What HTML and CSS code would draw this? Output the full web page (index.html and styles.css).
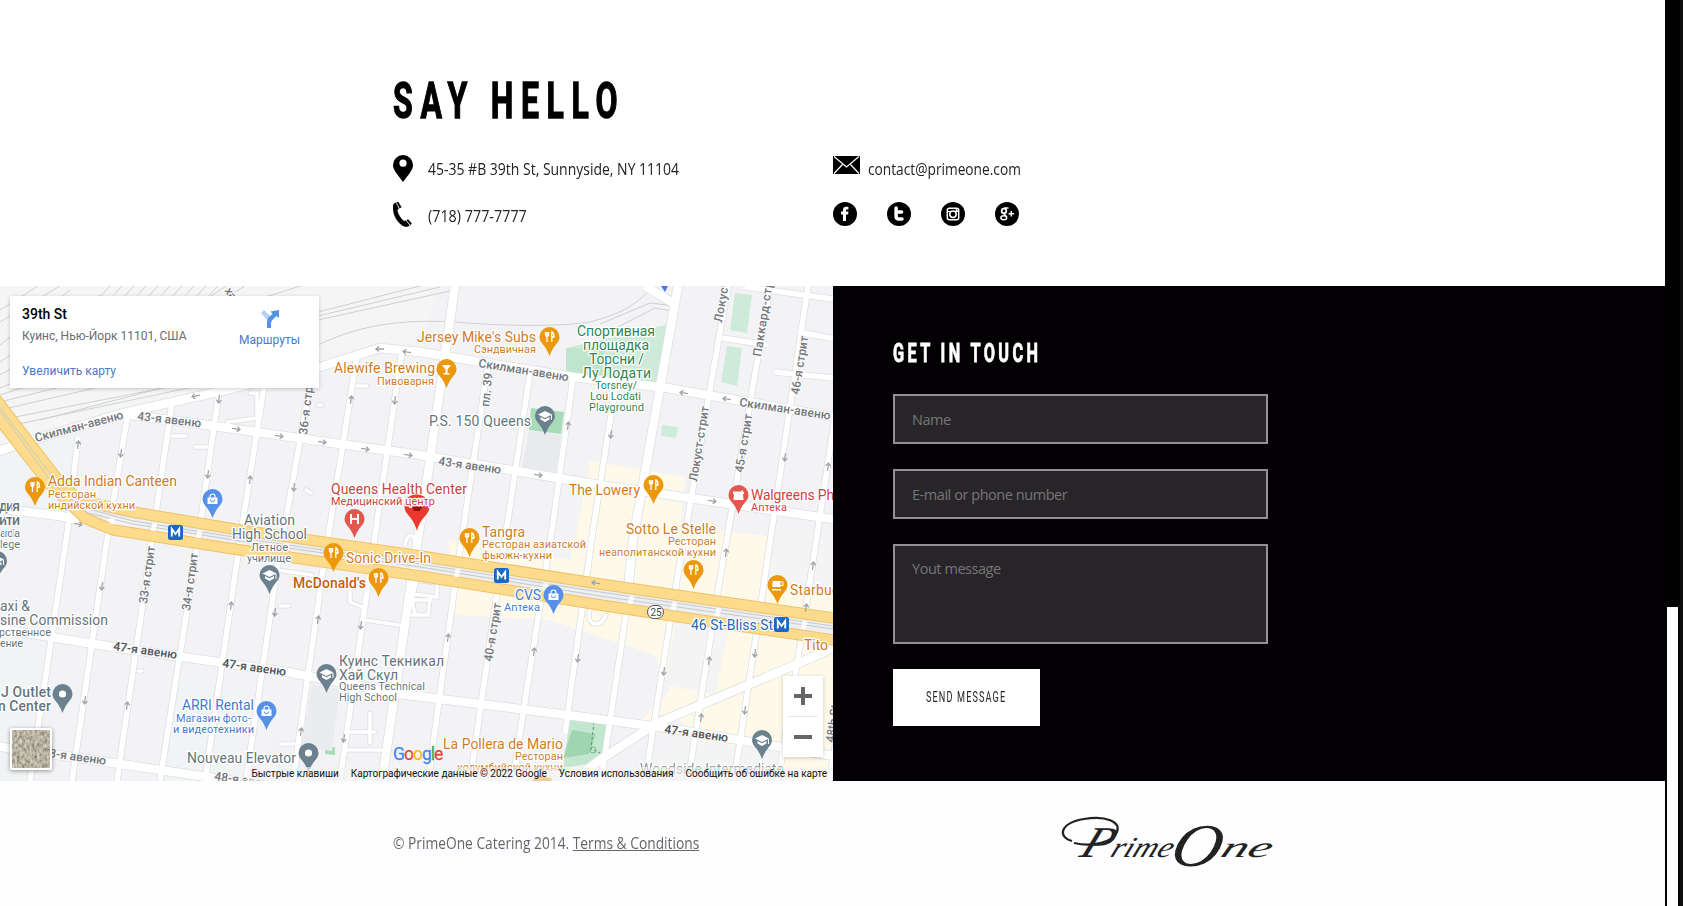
FILE: index.html
```html
<!DOCTYPE html>
<html lang="en">
<head>
<meta charset="utf-8">
<title>PrimeOne Catering – Contact</title>
<link rel="stylesheet" href="styles.css">
</head>
<body>
<div class="shell">
<main class="page">
  <section class="hello">
    <h1 class="hello-title"><span class="cond">SAY HELLO</span></h1>
    <div class="contacts">
      <div class="contact">
        <svg class="ico ico-pin" width="20" height="27" viewBox="0 0 20 27"><path fill-rule="evenodd" d="M10 0a10 10 0 0 1 10 10c0 3-1.600 5.500-3.200 8L10 27 3.200 18C1.600 15.500 0 13 0 10A10 10 0 0 1 10 0zm0 4.600a3.600 3.600 0 1 0 0 7.200 3.600 3.600 0 0 0 0-7.200z"/></svg>
        <span class="line"><span class="sq s-addr">45-35 #B 39th St, Sunnyside, NY 11104</span></span>
      </div>
      <div class="contact mail">
        <svg class="ico ico-mail" width="27" height="20" viewBox="0 0 27 20"><path d="M0 1h27v18H0z"/><path d="M1 1.500l12.500 10.500L26 1.500M1 18.500l8.500-9M26 18.500l-8.500-9" fill="none" stroke="#fff" stroke-width="1.200"/></svg>
        <span class="line"><span class="sq s-mail">contact@primeone.com</span></span>
      </div>
      <div class="contact">
        <svg class="ico ico-tel" width="19" height="26" viewBox="0 0 19 26"><path d="M0 5C0 2.500 1 1.500 2.600.800L5.600 6.600 4.200 8.200C5 12.500 7.500 16.500 11 19.300L12.800 18.800 16.500 23.500C14.500 25 12 25 9.500 23.500 3.500 19.500 0 12 0 5zM3.700.300L5.200 0 8.300 5.300 6.700 6zM13.800 18.300l1.300-.800 3.400 4-1 1.300z" stroke="#000" stroke-width=".5"/></svg>
        <span class="line"><span class="sq s-tel">(718) 777-7777</span></span>
      </div>
      <div class="social">
        <svg width="24" height="24" viewBox="0 0 24 24"><circle cx="12" cy="12" r="12"/><path d="M10 19v-6.500H8V9.600h2V8c0-2.300 1.200-3.300 3.200-3.300h2.200v2.900h-1.500c-.7 0-.9.300-.9.900v1.100h2.400l-.3 2.900H13V19z" fill="#fff"/></svg>
        <svg width="24" height="24" viewBox="0 0 24 24"><circle cx="12" cy="12" r="12"/><path d="M9.100 6v8.300c0 1.600 1 2.700 2.600 2.700h3.300M9.100 10h5.500" fill="none" stroke="#fff" stroke-width="3.500" stroke-linecap="round"/></svg>
        <svg width="24" height="24" viewBox="0 0 24 24"><circle cx="12" cy="12" r="12"/><rect x="6.300" y="6.300" width="11.400" height="11.400" rx="2" fill="none" stroke="#fff" stroke-width="1.500"/><path d="M6 9.500h3.300M14.700 9.500H18" stroke="#fff" stroke-width="1.200"/><circle cx="12" cy="12.300" r="3.200" fill="none" stroke="#fff" stroke-width="1.500"/><path d="M14.600 7.300h2v2h-2z" fill="#fff"/></svg>
        <svg width="24" height="24" viewBox="0 0 24 24"><circle cx="12" cy="12" r="12"/><g fill="none" stroke="#fff"><circle cx="9" cy="8.900" r="2.300" stroke-width="1.800"/><path d="M9 6h4.500M9.500 11.200c-1.500 1 1 1.500 1.600 2.700" stroke-width="1.300"/><ellipse cx="8.800" cy="15.800" rx="2.900" ry="2" stroke-width="1.500"/><path d="M16.300 9v5.600M13.500 11.800h5.600" stroke-width="1.500"/></g></svg>
      </div>
    </div>
  </section>

  <section class="middle">
    <div class="map">
      <svg class="map-canvas" width="833" height="495" viewBox="0 286 833 495">
        <defs>
          <symbol id="pin" viewBox="0 0 20 29" overflow="visible"><path d="M10 0a10 10 0 0 1 10 10c0 3-1.500 5.200-3.500 7.500C13.500 21 12 24 10 29 8 24 6.500 21 3.500 17.500 1.500 15.200 0 13 0 10A10 10 0 0 1 10 0z"/></symbol>
          <g id="food"><use href="#pin" width="20" height="29" fill="#eb980c"/><path d="M6 5v3.500q1.500 1.500 3 0V5M7.500 5v10M12.300 15V5q2.200.5 2.200 5h-2.200" stroke="#fff" stroke-width="1.300" fill="none"/></g>
          <g id="school"><use href="#pin" width="20" height="29" fill="#6b818d"/><path d="M10 5l7 3.500-7 3.500-7-3.500zM5.500 11v2.500L10 16l4.500-2.500V11L10 13.300zM16 9h1v5h-1z" fill="#fff"/></g>
          <g id="spot"><use href="#pin" width="20" height="29" fill="#6b818d"/><circle cx="10" cy="10" r="3.600" fill="#fff"/></g>
          <g id="shop"><use href="#pin" width="20" height="29" fill="#5690e8"/><path d="M5 8.500h10V15H5z" fill="#fff"/><path d="M7.500 9V7.500a2.500 2.500 0 0 1 5 0V9" stroke="#fff" stroke-width="1.200" fill="none"/><path d="M7.800 10.500a2.200 2.200 0 0 0 4.400 0" stroke="#4f8df0" fill="none"/></g>
          <g id="metro"><rect width="15" height="15" rx="2.500" fill="#1a67c5"/><path d="M3.800 11.500V4l3.700 5L11.200 4v7.500" stroke="#fff" stroke-width="1.900" fill="none"/></g>
          <path id="arr" d="M-4 0H4M1-2.500L4 0 1 2.500" fill="none" stroke="#a0a3a7" stroke-width="1.300"/>
          <g id="minor">
            <path d="M78 437L68 527 30 781M128 413L108 533 72 781M172 403L152 540 117 781M219 392L197 547 160 781M265 380L243 520 205 781M310 385L278 563 246 781M357 355L323 570 293 781M402 350L370 570 340 781M488 365L457 570 428 781M530 373L497 593 470 781M573 378L552 530 520 733 513 781M616 383L593 530 565 733M630 587L601 781M728 286L673 603 645 781M770 286L716 603 688 781M808 286L760 610 734 781M836 410L803 627 778 781M845 690L829 781"/>
            <path d="M722 338L768 345M798 332L840 340M775 372L833 378M745 287L833 299"/>
          </g>
          <g id="major">
            <path d="M455 286L427 480 410 590 382 781M678 286L633 540 628 590"/>
            <path d="M-5 452L33 440 123 413 217 392 320 367 380 348 420 352 573 377 667 388 840 418M130 415L200 424 333 443 420 455 600 485 840 520"/>
            <path d="M-5 628L113 647 287 672 400 694 567 715 667 728 840 757M-5 746L107 762 240 782M840 645L767 677 657 723 600 760 565 785M645 286L675 304"/>
            <path d="M-5 508L60 516 100 524"/>
          </g>
          <g id="alleys"><path d="M250 393h7v25l-29 4v5M172 436h14M195 447h12M306 490l5 3M357 386h10M318 405h4M280 606h9M138 671h4M280 744h20M370 713v30M345 732h30M345 750h40M350 590v12l12 5M365 620l40 6M277 570l35 5M405 545c2-15 12-10 10 0s8 12 4 28-10 28-3 42M410 600h20l-2 15h-16M415 580l22 3v14l-25-3M590 610c-5 15 10 20 16 5"/></g>
        </defs>
        <rect y="286" width="833" height="495" fill="#f3f3f5"/>
        <path d="M0 286H440L420 345 380 342 320 362 0 445z" fill="#f5f5f6"/>
        <path d="M0 445L75 435 60 510 0 505zM0 640l40 8-20 133H0zM170 680l80 12-14 89h-80z" fill="#f0f4f4"/>
        <path d="M590 461L686 477 680 525 833 545V781H748L680 720 640 722 670 690 655 655 550 620 455 615 448 540 570 560 575 540z" fill="#fef9e8"/>
        <path d="M680 590l55 10-20 95-50-10zM770 530l63 8v50l-70-5zM680 738l100 14-5 29H640z" fill="#f4f4f4"/>
        <path d="M566 348l100-23-8 66-92-14zM735 293l17 2-5 38-17-3zM727 346l15 2-5 38-16-4zM662 425l16 2-2 11-15-2z" fill="#cdebd8"/>
        <path d="M566 348l38 1-2 28-36-3z" fill="#bfe5cc"/>
        <path d="M531 408l33 4-3 22-32-4z" fill="#a8dbb8"/><path d="M529 431l32 4-5 37-34-4z" fill="#e8eaed"/>
        <path d="M570 718l39 6-9 38-37 6z" fill="#c2e6ce"/><path d="M572 730l24 4-7 20-26 4z" fill="#9fd6b1"/>
        <path d="M594 722l-3 27 9 4" fill="none" stroke="#59976f" stroke-dasharray="3 2"/><circle cx="593" cy="750" r="3" fill="none" stroke="#75b489"/>
        <path d="M325 748l10-1v8l-10-1z" fill="#a8dbb8"/><path d="M312 685l28 4-8 62-30-4z" fill="#ebecef"/>
        <g fill="none" stroke="#cdd1d3" stroke-width="1">
          <path d="M0 310L38 286M0 322L60 286M0 345L70 290M0 362L100 295M0 375L130 300M0 388L160 320M0 395L200 330M0 402L230 345M0 410L260 350M0 420L280 365M0 428L320 360M40 420L230 370"/>
          <path d="M60 340L110 286M72 340L122 286M84 340L134 286M96 340L146 286M108 340L158 286M120 340L170 286M132 340L182 286M144 340L194 286M156 340L206 286M168 340L218 286M190 310L226 286M205 310L245 286"/>
          <path d="M225 310L300 286M318 312L420 286M318 316L440 287M318 320L450 291M318 345C360 325 400 319 455 322 500 326 560 327 590 322 615 315 630 310 650 290M600 324L650 303 675 306M612 330L655 308 672 311"/>
        </g>
        <g fill="none" stroke="#dddfe3" stroke-width="7"><use href="#minor"/></g>
        <g fill="none" stroke="#dddfe3" stroke-width="10"><use href="#major"/></g>
        <g fill="none" stroke="#dadde1" stroke-width="5" stroke-linecap="round"><use href="#alleys"/></g>
        <g fill="none" stroke="#fff" stroke-width="3.500" stroke-linecap="round"><use href="#alleys"/></g>
        <g fill="none" stroke="#fff" stroke-width="5.500"><use href="#minor"/></g>
        <g fill="none" stroke="#fff" stroke-width="8.500"><use href="#major"/></g>

        <path d="M90 508L133 514 240 536 420 562 600 594 833 627" fill="none" stroke="#eceef1" stroke-width="14"/>
        <g fill="none" stroke="#efc268" stroke-width="11.500"><path d="M-5 398L55 476 78 500 133 512 240 530 420 556 600 584 840 619M-8 410L50 485 85 518 113 530 240 550 420 576 600 605 840 641"/></g>
        <g fill="none" stroke="#fcdc8c" stroke-width="9.500"><path d="M-5 398L55 476 78 500 133 512 240 530 420 556 600 584 840 619M-8 410L50 485 85 518 113 530 240 550 420 576 600 605 840 641"/></g>
        <g fill="none" stroke="#c6c9cc" stroke-width="1"><path d="M-5 401L55 480 85 508 133 521 240 538 420 564 600 592 833 626M-5 404L52 483 88 513 133 524 240 541 420 567 600 596 833 629"/></g>
        <path d="M113 518l-1 6M155 523l-2 8M200 530l-2 8M287 543l-1 7M458 569l-2 8M546 583l-2 8M632 596l-2 8M675 602l-2 8M719 608l-2 8M805 621l-2 8" stroke="#fff" stroke-opacity=".8" stroke-width="5"/>

        <use href="#arr" transform="translate(196 396) rotate(168)"/><use href="#arr" transform="translate(219 399) rotate(97)"/><use href="#arr" transform="translate(236 429) rotate(8)"/><use href="#arr" transform="translate(279 436) rotate(8)"/><use href="#arr" transform="translate(322 442) rotate(8)"/><use href="#arr" transform="translate(365 449) rotate(8)"/><use href="#arr" transform="translate(408 455) rotate(8)"/><use href="#arr" transform="translate(380 349) rotate(180)"/><use href="#arr" transform="translate(407 352) rotate(188)"/><use href="#arr" transform="translate(78 445) rotate(-82)"/><use href="#arr" transform="translate(121 453) rotate(98)"/><use href="#arr" transform="translate(208 474) rotate(98)"/><use href="#arr" transform="translate(250 480) rotate(-82)"/><use href="#arr" transform="translate(294 487) rotate(98)"/><use href="#arr" transform="translate(351 400) rotate(-82)"/><use href="#arr" transform="translate(395 400) rotate(98)"/><use href="#arr" transform="translate(78 524) rotate(8)"/>
        <use href="#arr" transform="translate(568 426) rotate(-82)"/><use href="#arr" transform="translate(611 434) rotate(98)"/><use href="#arr" transform="translate(538 475) rotate(8)"/><use href="#arr" transform="translate(684 393) rotate(188)"/><use href="#arr" transform="translate(727 399) rotate(188)"/><use href="#arr" transform="translate(712 501) rotate(8)"/><use href="#arr" transform="translate(785 457) rotate(98)"/><use href="#arr" transform="translate(828 467) rotate(-82)"/><use href="#arr" transform="translate(726 553) rotate(-82)"/><use href="#arr" transform="translate(813 566) rotate(-82)"/><use href="#arr" transform="translate(806 608) rotate(-82)"/><use href="#arr" transform="translate(596 583) rotate(188)"/><use href="#arr" transform="translate(102 586) rotate(98)"/><use href="#arr" transform="translate(231 606) rotate(-82)"/><use href="#arr" transform="translate(275 612) rotate(98)"/><use href="#arr" transform="translate(318 620) rotate(-82)"/><use href="#arr" transform="translate(361 625) rotate(98)"/><use href="#arr" transform="translate(448 638) rotate(-82)"/><use href="#arr" transform="translate(534 652) rotate(-82)"/><use href="#arr" transform="translate(578 658) rotate(98)"/><use href="#arr" transform="translate(664 671) rotate(98)"/><use href="#arr" transform="translate(709 661) rotate(-82)"/><use href="#arr" transform="translate(755 653) rotate(98)"/><use href="#arr" transform="translate(745 710) rotate(98)"/><use href="#arr" transform="translate(701 718) rotate(-82)"/><use href="#arr" transform="translate(85 700) rotate(98)"/><use href="#arr" transform="translate(127 706) rotate(-82)"/><use href="#arr" transform="translate(301 732) rotate(-82)"/><use href="#arr" transform="translate(344 738) rotate(98)"/>

        <g class="street">
          <text transform="translate(36 442) rotate(-15)" textLength="91">Скилман-авеню</text>
          <text transform="translate(137 420) rotate(6.500)" textLength="64">43-я авеню</text>
          <text transform="translate(307 435) rotate(-83)" textLength="62">36-я стрит</text>
          <text transform="translate(478 367) rotate(9)" textLength="91">Скилман-авеню</text>
          <text transform="translate(489 407) rotate(-84)" textLength="34">пл. 39</text>
          <text transform="translate(438 465) rotate(8)" textLength="63">43-я авеню</text>
          <text transform="translate(722 323) rotate(-80)" textLength="80">Локуст-стрит</text>
          <text transform="translate(761 357) rotate(-81)" textLength="90">Паккард-стрит</text>
          <text transform="translate(799 395) rotate(-81)" textLength="59">46-я стрит</text>
          <text transform="translate(697 482) rotate(-81)" textLength="76">Локуст-стрит</text>
          <text transform="translate(743 473) rotate(-81)" textLength="59">45-я стрит</text>
          <text transform="translate(739 406) rotate(8.500)" textLength="92">Скилман-авеню</text>
          <text transform="translate(147 604) rotate(-82)" textLength="58">33-я стрит</text>
          <text transform="translate(190 611) rotate(-82)" textLength="58">34-я стрит</text>
          <text transform="translate(492 662) rotate(-81)" textLength="59">40-я стрит</text>
          <text class="dk" transform="translate(113 650) rotate(8)" textLength="64">47-я авеню</text>
          <text class="dk" transform="translate(222 667) rotate(8)" textLength="64">47-я авеню</text>
          <text class="dk" transform="translate(664 733) rotate(8)" textLength="64">47-я авеню</text>
          <text transform="translate(42 756) rotate(8)" textLength="64">48-я авеню</text>
          <text transform="translate(214 780) rotate(8)" textLength="64">48-я авеню</text>
          <text transform="translate(834 743) rotate(-82)" textLength="38">48th St</text>
          <text transform="translate(236 298) rotate(-120)">ех</text>
        </g>
        <g class="poi big">
          <g class="or">
            <text x="48" y="486" textLength="129">Adda Indian Canteen</text>
            <text x="417" y="342" textLength="119">Jersey Mike's Subs</text>
            <text x="334" y="373" textLength="101">Alewife Brewing</text>
            <text x="569" y="495" textLength="71">The Lowery</text>
            <text x="482" y="537" textLength="43">Tangra</text>
            <text x="626" y="534" textLength="90">Sotto Le Stelle</text>
            <text x="346" y="563" textLength="85">Sonic Drive-In</text>
            <text class="hot" x="293" y="588" textLength="73">McDonald's</text>
            <text x="790" y="595" textLength="64">Starbucks</text>
            <text x="804" y="650" textLength="24">Tito</text>
            <text x="443" y="749" textLength="120">La Pollera de Mario</text>
          </g>
          <g class="rd">
            <text x="331" y="494" textLength="136">Queens Health Center</text>
            <text x="751" y="500" textLength="128">Walgreens Pharmacy</text>
          </g>
          <g class="gn">
            <text x="577" y="336" textLength="78">Спортивная</text><text x="583" y="350" textLength="66">площадка</text><text x="589" y="364" textLength="55">Торсни /</text><text x="582" y="378" textLength="69">Лу Лодати</text>
          </g>
          <g class="gy">
            <text x="429" y="426" textLength="102">P.S. 150 Queens</text>
            <text x="244" y="525" textLength="51">Aviation</text><text x="232" y="539" textLength="75">High School</text>
            <text x="0" y="611" textLength="30">axi &amp;</text><text x="0" y="625" textLength="108">sine Commission</text>
            <text class="md" x="-3" y="697" textLength="54">IJ Outlet</text><text class="md" x="-2" y="711" textLength="53">n Center</text>
            <text class="md" x="-1" y="511" textLength="21">дия</text><text class="md" x="-1" y="525" textLength="21">ити</text>
            <text x="339" y="666" textLength="105">Куинс Текникал</text><text x="339" y="680" textLength="59">Хай Скул</text>
            <text x="187" y="763" textLength="109">Nouveau Elevator</text>
            <text x="640" y="774" textLength="144" opacity=".75">Woodside Intermediate</text>
          </g>
          <g class="bl">
            <text x="515" y="600" textLength="26">CVS</text><text x="182" y="710" textLength="72">ARRI Rental</text><text class="mt" x="691" y="630" textLength="82">46 St-Bliss St</text>
          </g>
        </g>
        <g class="poi small">
          <g class="or">
            <text x="48" y="498" textLength="48">Ресторан</text><text x="48" y="509" textLength="87">индийской кухни</text>
            <text x="474" y="353" textLength="62">Сэндвичная</text><text x="377" y="385" textLength="57">Пивоварня</text>
            <text x="482" y="548" textLength="104">Ресторан азиатской</text><text x="482" y="559" textLength="70">фьюжн-кухни</text>
            <text x="668" y="545" textLength="48">Ресторан</text><text x="599" y="556" textLength="117">неаполитанской кухни</text>
            <text x="515" y="760" textLength="48">Ресторан</text><text x="457" y="771" textLength="106">колумбийской кухни</text>
          </g>
          <g class="rd"><text x="751" y="511" textLength="36">Аптека</text></g>
          <g class="gn"><text x="595" y="389" textLength="42">Torsney/</text><text x="590" y="400" textLength="51">Lou Lodati</text><text x="589" y="411" textLength="55">Playground</text></g>
          <g class="gy">
            <text x="251" y="551" textLength="37">Летное</text><text x="247" y="562" textLength="44">училище</text>
            <text x="0" y="537" textLength="20">ardia</text><text x="0" y="548" textLength="20">lege</text>
            <text x="-1" y="636" textLength="52">рственное</text><text x="0" y="647" textLength="23">ение</text>
            <text x="339" y="690" textLength="86">Queens Technical</text><text x="339" y="701" textLength="58">High School</text>
          </g>
          <g class="bl"><text x="504" y="611" textLength="36">Аптека</text><text x="176" y="722" textLength="75">Магазин фото-</text><text x="173" y="733" textLength="81">и видеотехники</text></g>
        </g>

        <use href="#food" x="25" y="477"/><use href="#food" x="539.500" y="327"/><use href="#food" x="643.500" y="475"/><use href="#food" x="459.500" y="528"/><use href="#food" x="683.500" y="560"/><use href="#food" x="323.500" y="543"/><use href="#food" x="368.500" y="568"/>
        <g transform="translate(436.500 359)"><use href="#pin" width="20" height="29" fill="#eb980c"/><path d="M5.500 6h9L11 10.500V14h2v1.500H7V14h2v-3.500z" fill="#fff"/></g>
        <g transform="translate(767.500 575)"><use href="#pin" width="20" height="29" fill="#eb980c"/><path d="M5 6h8v6H5zM4.500 14h9v1.500h-9z" fill="#fff"/><path d="M13 7h2.500v3.500H13" fill="none" stroke="#fff"/></g>
        <g transform="translate(728.500 485)"><use href="#pin" width="20" height="29" fill="#e2574f"/><path d="M4.500 6.500h8L14 5l1 1-1 1h1.500v2h-1l.5 6h-10l.5-6h-1z" fill="#fff"/></g>
        <g transform="translate(344.500 509)"><use href="#pin" width="20" height="29" fill="#e2574f"/><path d="M6.500 5v10M13.500 5v10M6.500 10h7" stroke="#fff" stroke-width="2"/></g>
        <path d="M416.500 494.500c8 0 13 5 13 12 0 9-9 10-12.500 24.500C413.500 516.500 404.500 515 404.500 506.500c0-7 4-12 12-12z" fill="#ea3a30"/><path d="M412 507h10l-2 4h-6z" fill="#960f0a"/>
        <g class="poi small rd"><text x="331" y="505" textLength="104">Медицинский центр</text></g>
        <use href="#school" x="535" y="406"/><use href="#school" x="259.500" y="565"/><use href="#school" x="316.500" y="664"/><use href="#school" x="752" y="730"/><use href="#school" x="-13" y="551"/>
        <use href="#spot" x="52.500" y="684"/><use href="#spot" x="298.500" y="743"/>
        <use href="#shop" x="202.500" y="489"/><use href="#shop" x="543.500" y="585"/><use href="#shop" x="256.500" y="701"/>
        <use href="#metro" x="168" y="525"/><use href="#metro" x="494" y="568"/><use href="#metro" x="774" y="617"/>
        <path d="M661 286h7l-3 6z" fill="#4f74e8"/><path d="M532 781l5-6 14 3 1 3z" fill="#eb980c"/>
        <rect x="647.500" y="605.500" width="16" height="13" rx="6.500" fill="#fff" stroke="#555"/><text x="650.500" y="615.500" class="shield">25</text>
      </svg>

      <div class="card">
        <div class="card-main"><div class="card-title">39th St</div><div class="card-addr">Куинс, Нью-Йорк 11101, США</div><div class="card-link">Увеличить карту</div></div>
        <div class="card-dir">
          <svg width="18" height="18" viewBox="0 0 18 18"><path d="M0 3l3-3 6.500 6.500-2 5z" fill="#b4d0f7"/><path d="M6 18v-6q0-3 2-5l3.500-3.300L9.500 1.500 18 0v8l-2.500-2-3.200 3Q10 11 10 13v5z" fill="#5594e4"/></svg>
          <span>Маршруты</span>
        </div>
      </div>
      <div class="zoom"><i class="plus"></i><i class="minus"></i></div>
      <svg class="sat" width="42" height="42" viewBox="0 0 42 42"><filter id="n" x="0" y="0" width="1" height="1"><feTurbulence type="fractalNoise" baseFrequency=".4 .25" numOctaves="4" seed="4"/><feColorMatrix values="1.300 0 0 0 -.050  1.250 0 0 0 -.070  1.100 0 0 0 -.090  0 0 0 0 1"/></filter><rect width="42" height="42" rx="2" fill="#fff"/><rect x="2" y="2" width="38" height="38" fill="#94907e"/><rect x="2" y="2" width="38" height="38" filter="url(#n)" opacity=".65"/></svg>
      <div class="google" aria-label="Google"><b class="g1">G</b><b class="g2">o</b><b class="g3">o</b><b class="g1">g</b><b class="g4">l</b><b class="g2">e</b></div>
      <div class="legal"><span>Быстрые клавиши</span><span>Картографические данные © 2022 Google</span><span>Условия использования</span><span>Сообщить об ошибке на карте</span></div>
    </div>

    <form class="touch">
      <h2 class="touch-title"><span class="cond">GET IN TOUCH</span></h2>
      <input class="field" type="text" placeholder="Name">
      <input class="field" type="text" placeholder="E-mail or phone number">
      <textarea class="field area" placeholder="Yout message"></textarea>
      <button class="send" type="button"><span class="cond">SEND MESSAGE</span></button>
    </form>
  </section>

  <footer class="foot">
    <p class="copy"><span class="sq s-copy">© PrimeOne Catering 2014. <a href="#">Terms &amp; Conditions</a></span></p>
    <svg class="brand" width="216" height="60" viewBox="1060 814 216 60">
      <path d="M1072 841C1057 837 1060 823 1084 819 1106 815 1121 822 1117 832 1112 843 1092 847 1074 843" fill="none" stroke="#222" stroke-width="2.200"/>
      <g class="brand-text"><text transform="translate(1078 857) skewX(-22)" textLength="92" lengthAdjust="spacingAndGlyphs"><tspan font-size="44">P</tspan><tspan font-size="29">rime</tspan></text>
      <text transform="translate(1168 866) skewX(-14)" font-size="61" textLength="50" lengthAdjust="spacingAndGlyphs">O</text>
      <text transform="translate(1219 857) skewX(-22)" font-size="29" textLength="50" lengthAdjust="spacingAndGlyphs">ne</text></g>
    </svg>
  </footer>
</main>
<aside class="track"><div class="thumb"></div></aside>
</div>
</body>
</html>
```
FILE: styles.css
```css
* { box-sizing: border-box; }
body { margin: 0; background: #fff; font-family: "Open Sans", "Noto Sans", sans-serif; overflow: hidden; }
.shell { display: flex; width: 1683px; height: 906px; }
.page { width: 1665px; display: flex; flex-direction: column; }
.track { width: 18px; background: #020203; border-right: 3px solid #0e0e0e; padding: 607px 2px 0 2px; }
.thumb { width: 11px; height: 299px; background: #fff; }

.hello { height: 286px; padding: 70px 0 0 393px; }
.hello-title, .touch-title { margin: 0; font-family: Roboto, sans-serif; font-weight: 700; white-space: nowrap; }
.cond { display: inline-block; transform-origin: 0 50%; }
.hello-title { font-size: 50px; line-height: 62px; height: 62px; color: #000; }
.hello-title .cond { transform: scaleX(.64); letter-spacing: 12px; -webkit-text-stroke: 1.300px #000; }
.contacts { display: grid; grid-template-columns: 440px 300px; grid-template-rows: 47px 47px; margin-top: 23px; }
.contact { display: flex; align-items: flex-start; font-size: 15.500px; line-height: 28px; color: #222; }
.contact .line { margin-left: 14.500px; white-space: nowrap; }
.contact.mail .line { margin-left: 8px; }
.ico-tel { margin-right: 1px; }
.sq { display: inline-block; transform-origin: 0 50%; white-space: nowrap; transform: scaleX(.885); }
.s-addr { transform: scaleX(.902); }
.s-tel { transform: scaleX(.925); }
.social { display: flex; gap: 30px; }

.middle { display: flex; height: 495px; }
.map { width: 833px; height: 495px; position: relative; overflow: hidden; font-family: Roboto, sans-serif; }
.map-canvas { display: block; }
.street text { font: 500 12px Roboto, sans-serif; fill: #74777b; stroke: #f8f9fa; stroke-width: 2px; paint-order: stroke; }
.street .dk { fill: #505357; }
.poi text { stroke: #fff; stroke-width: 2.500px; paint-order: stroke; stroke-linejoin: round; font-family: Roboto, sans-serif; }
.big text { font-size: 14px; }
.small text { font-size: 11px; }
.small.rd text { font-size: 11px; }
.or text { fill: #cf7c28; }
.or .hot { fill: #c75b0c; font-weight: 500; }
.rd text { fill: #cb4444; }
.gn text { fill: #2f8654; }
.gy text { fill: #65747c; }
.gy .md { font-weight: 500; }
.bl text { fill: #447ccf; }
.bl .mt { fill: #2767b3; }
.shield { font: 10px Roboto, sans-serif; fill: #444; }

.card { position: absolute; left: 10px; top: 10px; width: 309px; height: 92px; background: #fff; box-shadow: 0 1px 4px rgba(0,0,0,.2); display: flex; justify-content: space-between; padding: 9px 19px 0 12px; }
.card-title { font-size: 14px; font-weight: 500; line-height: 19px; color: #000; }
.card-addr { font-size: 12px; line-height: 14px; color: #6a6d71; margin-top: 5px; }
.card-link { font-size: 12px; line-height: 14px; color: #4b78c8; margin-top: 21px; }
.card-dir { display: flex; flex-direction: column; align-items: center; padding-top: 5px; font-size: 12px; line-height: 14px; color: #4b78c8; gap: 5px; }
.zoom { position: absolute; left: 783px; top: 390px; width: 40px; height: 81px; background: #fff; box-shadow: 0 1px 4px rgba(0,0,0,.2); }
.zoom::before { content: ""; position: absolute; left: 5px; top: 40px; width: 30px; height: 1px; background: #e6e6e6; }
.plus, .plus::after, .minus { position: absolute; width: 18px; height: 4px; background: #666; left: 11px; top: 18px; }
.plus::after { content: ""; left: 0; top: 0; transform: rotate(90deg); }
.minus { top: 59px; }
.sat { position: absolute; left: 10px; top: 442px; filter: drop-shadow(0 1px 2px rgba(0,0,0,.4)); }
.google { position: absolute; left: 393px; top: 457px; font-size: 17.500px; line-height: 22px; letter-spacing: -1px; text-shadow: 0 0 2px #fff; }
.google b { font-weight: 400; -webkit-text-stroke: .3px currentColor; }
.g1 { color: #4285f4; } .g2 { color: #ea4335; } .g3 { color: #fbbc05; } .g4 { color: #34a853; }
.legal { position: absolute; right: 0; bottom: 0; height: 14px; padding: 0 6px 0 6px; display: flex; gap: 12px; background: rgba(245,245,245,.6); font-size: 10px; line-height: 14px; color: #111; white-space: nowrap; }

.touch { width: 832px; background: #020002; padding: 53px 0 0 60px; display: flex; flex-direction: column; align-items: flex-start; }
.touch-title { font-size: 25px; line-height: 29px; height: 30px; color: #fff; margin-bottom: 25px; }
.touch-title .cond { transform: scaleX(.65); letter-spacing: 5.200px; -webkit-text-stroke: .8px #fff; }
.field { display: block; width: 375px; height: 50px; margin: 0 0 25px; border: 2px solid #929094; border-radius: 0; background: #272528; color: #fff; padding: 1px 17px 0; font-family: "Open Sans", sans-serif; font-size: 14.500px; letter-spacing: -.450px; outline: 0; resize: none; }
.field::placeholder { color: #777578; opacity: 1; }
.area { height: 100px; padding-top: 12px; line-height: 22px; }
.send { width: 147px; height: 57px; border: 0; background: #fff; padding: 0 0 2px 33px; text-align: left; font: 400 15.500px Roboto, sans-serif; color: #272528; white-space: nowrap; }
.send .cond { transform: scaleX(.59); letter-spacing: 1.900px; }

.foot { display: flex; height: 125px; padding-left: 392.500px; background: #fefdff; }
.copy { width: 667.500px; margin: 48px 0 0; font-size: 15.500px; line-height: 28px; color: #666; }
.copy a { color: inherit; }
.s-copy { transform: scaleX(.889); }
.brand { margin-top: 33px; }
.brand-text { font-family: "Liberation Serif", serif; font-style: italic; fill: #222; }
```
